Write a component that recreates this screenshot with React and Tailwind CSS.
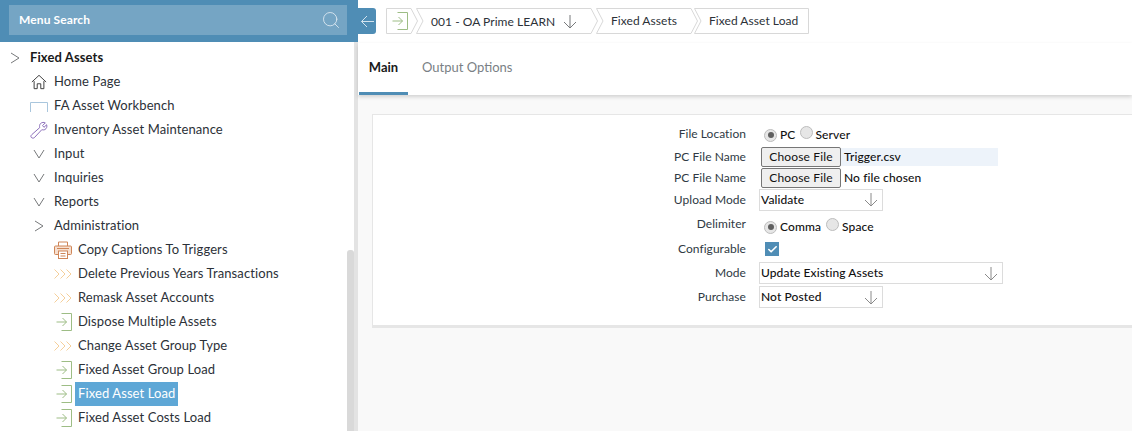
import React from "react";
import { Search, Check } from "lucide-react";

const Chev = ({ dir }) => (
  <svg width="14" height="14" viewBox="0 0 14 14" fill="none" stroke="#77797b" strokeWidth="1">
    {dir === "right" ? <path d="M2 2 L10 7 L2 12" /> : <path d="M2 3 L7 11 L12 3" />}
  </svg>
);
const Home = () => (
  <svg className="ml-px" width="16" height="16" viewBox="0 0 18 18" fill="none" stroke="#3d3d3d" strokeWidth="1.1">
    <path d="M1 9 L9 1.5 L17 9 M3.5 8 V16.5 H7 V11 H11 V16.5 H14.5 V8" />
  </svg>
);
const Bench = () => (
  <svg width="18" height="18" viewBox="0 0 18 18" fill="none" stroke="#a9c6dd" strokeWidth="1">
    <path d="M0.5 15 V5.5 H17.5 V15" />
  </svg>
);
const Wrench = () => (
  <svg width="18" height="19" viewBox="0 0 20 20" fill="none" stroke="#8a6cb8" strokeWidth="1.1">
    <path d="M11.5 2.5 C13 .8 15.8 .6 17 1.5 L14 4.5 L15.5 6.5 L18.5 3.6 C19.2 5.5 18.5 8 16.5 9 C15 9.6 14 9.3 13.2 9 L4.8 18 C3.5 19.2 1 18 1 16.8 C.8 16 1.2 15.5 2 14.6 L10.8 6.8 C10.4 5.2 10.6 3.6 11.5 2.5 Z" />
  </svg>
);
const Printer = () => (
  <svg width="18" height="18" viewBox="0 0 18 18" fill="none" stroke="#cf8659" strokeWidth="1">
    <path d="M4.5 5 V1 H13.5 V5" />
    <rect x="0.5" y="5" width="17" height="8.5" rx="1" fill="#f6dfcf" />
    <rect x="4.5" y="10" width="9" height="7.5" fill="#fff" />
    <path d="M3 7.5 H15" />
    <path d="M6.5 12.5 H11.5 M6.5 15 H11.5" />
  </svg>
);
const Triple = () => (
  <svg width="18" height="12" viewBox="0 0 18 12" fill="none" stroke="#f5cf9a" strokeWidth="1">
    <path d="M.5 1.5 L5 6 L.5 10.5 M6.5 1.5 L11 6 L6.5 10.5 M12.5 1.5 L17 6 L12.5 10.5" />
  </svg>
);
const Enter = () => (
  <svg width="16" height="18" viewBox="0 0 16 18" fill="none" stroke="#9dbd85" strokeWidth="1">
    <path d="M5.5 .5 H15.5 V17.5 H5.5" />
    <path d="M.5 9 H10.5 M6.5 5 L10.5 9 L6.5 13" />
  </svg>
);
const Down = ({ c = "#77797b" }) => (
  <svg width="14" height="15" viewBox="0 0 14 15" fill="none" stroke={c} strokeWidth="1">
    <path d="M7 1 V14 M1 8 L7 14 L13 8" />
  </svg>
);

const Row = ({ icon, children, pl, bold, active }) => (
  <div className={`flex items-center h-6 ${pl}`}>
    <span className="flex w-6 shrink-0 items-center justify-start">{icon}</span>
    {active ? (
      <span className="-ml-[5px] flex h-6 items-center bg-[#5ea7d6] px-[3px] text-white">{children}</span>
    ) : (
      <span className={bold ? "font-bold text-[#1a1a1a]" : "text-[#2c3138]"}>{children}</span>
    )}
  </div>
);

const Radio = ({ on }) => (
  <span className="inline-flex h-[13px] w-[13px] shrink-0 items-center justify-center rounded-full border border-[#bdbdbd] bg-[#e6e6e6]">
    {on && <span className="h-[6px] w-[6px] rounded-full bg-[#5f5f5f]" />}
  </span>
);
const Label = ({ children }) => (
  <div className="w-[390px] shrink-0 pr-[17px] text-right text-[12px] tracking-[0.05px] text-[#2f3a44]">{children}</div>
);
const FRow = ({ label, h, children }) => (
  <div className={`flex items-center ${h}`}>
    <Label>{label}</Label>
    <div className="flex items-center text-[12px] tracking-[0.1px]">{children}</div>
  </div>
);
const Select = ({ w, children }) => (
  <div className={`flex h-[22px] items-center justify-between border border-[#dcdcdc] bg-white pl-[1px] pr-[4px] text-[#111] ${w}`}>
    <span className="font-medium">{children}</span>
    <Down c="#8a8a8a" />
  </div>
);
const FileBtn = () => (
  <span className="flex h-5 w-20 items-center justify-center rounded-[2px] border border-[#767676] bg-[#efefef] text-[12px] tracking-[0.15px] text-[#111]">Choose File</span>
);

function Crumbs() {
  const stroke = "#d8d8d8";
  const Shape = ({ w, first, children, pad }) => (
    <div className="relative flex h-[26px] items-center" style={{ width: w }}>
      <svg className="absolute inset-0" width={w} height="26" fill="#fff" stroke={stroke} strokeWidth="1">
        <path d={first
          ? `M.5 .5 H${w - 7} L${w - .5} 13 L${w - 7} 25.5 H.5 Z`
          : `M.5 .5 H${w - 7} L${w - .5} 13 L${w - 7} 25.5 H.5 L7 13 Z`} />
      </svg>
      <div className={`relative flex items-center ${pad}`}>{children}</div>
    </div>
  );
  return (
    <div className="flex items-center text-[12px] tracking-[0.05px]">
      <Shape w={32} first pad="pl-[6px]"><Enter /></Shape>
      <div className="-ml-[2px]">
        <Shape w={182} pad="pl-[15px] gap-[8px]">
          <span className="translate-y-px">001 - OA Prime LEARN</span><Down />
        </Shape>
      </div>
      <div className="-ml-[2px]">
        <Shape w={102} pad="pl-[15px]"><span>Fixed Assets</span></Shape>
      </div>
      <div className="-ml-[4px] flex h-[26px] items-center">
        <div className="relative flex h-[26px] w-[115px] items-center pl-[15px]">
          <svg className="absolute inset-0" width="115" height="26" fill="#fff" stroke={stroke} strokeWidth="1">
            <path d="M.5 .5 H114.5 V25.5 H.5 L7 13 Z" />
          </svg>
          <span className="relative">Fixed Asset Load</span>
        </div>
      </div>
    </div>
  );
}

export default function App() {
  return (
    <div className="flex h-[431px] w-[1132px] overflow-hidden bg-white font-['Lato',sans-serif] text-[13px] tracking-[0.1px]">
      <aside className="flex w-[358px] shrink-0 flex-col border-r-4 border-[#e3e3e3]">
        <div className="-mr-1 flex h-[42px] shrink-0 items-start bg-[#4f8db5] pl-[9px] pt-[5px]">
          <div className="flex h-[30px] w-[338px] items-center justify-between bg-[#75a5c4] pl-[10px] pr-[6px] text-[12px] text-white">
            <span className="font-bold">Menu Search</span>
            <Search size={20} strokeWidth={1} color="#e3edf4" />
          </div>
        </div>
        <div className="relative flex-1 pt-1">
          <Row pl="pl-[9px]" bold icon={<Chev dir="right" />}><span className="-ml-[3px] block">Fixed Assets</span></Row>
          <Row pl="pl-[30px]" icon={<Home />}>Home Page</Row>
          <Row pl="pl-[30px]" icon={<Bench />}>FA Asset Workbench</Row>
          <Row pl="pl-[30px]" icon={<Wrench />}>Inventory Asset Maintenance</Row>
          <Row pl="pl-[32px]" icon={<Chev dir="down" />}><span className="-ml-0.5">Input</span></Row>
          <Row pl="pl-[32px]" icon={<Chev dir="down" />}><span className="-ml-0.5">Inquiries</span></Row>
          <Row pl="pl-[32px]" icon={<Chev dir="down" />}><span className="-ml-0.5">Reports</span></Row>
          <Row pl="pl-[33px]" icon={<Chev dir="right" />}><span className="-ml-[3px]">Administration</span></Row>
          <Row pl="pl-[54px]" icon={<Printer />}>Copy Captions To Triggers</Row>
          <Row pl="pl-[54px]" icon={<Triple />}>Delete Previous Years Transactions</Row>
          <Row pl="pl-[54px]" icon={<Triple />}>Remask Asset Accounts</Row>
          <Row pl="pl-[56px]" icon={<Enter />}><span className="-ml-0.5">Dispose Multiple Assets</span></Row>
          <Row pl="pl-[54px]" icon={<Triple />}>Change Asset Group Type</Row>
          <Row pl="pl-[56px]" icon={<Enter />}><span className="-ml-0.5">Fixed Asset Group Load</span></Row>
          <Row pl="pl-[56px]" active icon={<Enter />}>Fixed Asset Load</Row>
          <Row pl="pl-[56px]" icon={<Enter />}><span className="-ml-0.5">Fixed Asset Costs Load</span></Row>
          <div className="absolute right-0 top-[208px] h-[190px] w-[7px] rounded-t-[3px] bg-[#d9d9d9]" />
        </div>
      </aside>

      <main className="relative flex min-w-0 flex-1 flex-col bg-[#f9f9f9]">
        <div className="absolute left-0 top-2 flex h-[26px] w-[18px] items-center justify-center rounded-r-[3px] bg-[#4f8db5]">
          <svg width="13" height="13" viewBox="0 0 13 13" fill="none" stroke="#d3e3ee" strokeWidth="1">
            <path d="M0.5 6.5 H13 M6 1 L0.5 6.5 L6 12" />
          </svg>
        </div>
        <div className="flex h-[43px] shrink-0 items-start bg-white pl-7 pt-2 text-[#2c3138]">
          <Crumbs />
        </div>
        <div className="flex h-[52px] shrink-0 items-stretch bg-white pl-px tracking-normal shadow-[0_2px_4px_rgba(0,0,0,0.16)]">
          <div className="flex w-[49px] items-center justify-center border-b-[3px] border-[#4f8db5] font-bold text-[#1a1a1a]">Main</div>
          <div className="flex items-center pl-[14px] pb-[3px] text-[#7a7f85]">Output Options</div>
        </div>
        <section className="ml-[14px] mt-[19px] h-[214px] shrink-0 border border-b-[3px] border-r-0 border-[#e6e6e6] bg-white pt-[7px]">
          <FRow label="File Location" h="h-6">
            <span className="flex translate-y-px items-center pl-px">
              <Radio on /><span className="ml-[3px] font-medium text-[#111]">PC</span>
              <span className="ml-[5px]"><Radio /></span><span className="ml-[2px] font-medium text-[#111]">Server</span>
            </span>
          </FRow>
          <FRow label="PC File Name" h="h-[21px]">
            <span className="-ml-[2px]"><FileBtn /></span>
            <span className="flex h-[18px] w-[157px] items-center bg-[#edf3fa] pl-[3px] font-medium text-[#111]">Trigger.csv</span>
          </FRow>
          <FRow label="PC File Name" h="h-[21px]">
            <span className="-ml-[2px]"><FileBtn /></span>
            <span className="pl-[3px] font-medium text-[#111]">No file chosen</span>
          </FRow>
          <FRow label="Upload Mode" h="h-[23px]">
            <span className="-ml-[4px]"><Select w="w-[124px]">Validate</Select></span>
          </FRow>
          <FRow label="Delimiter" h="h-[26px]">
            <span className="flex translate-y-[3px] items-center pl-px">
              <Radio on /><span className="ml-[3px] font-medium text-[#111]">Comma</span>
              <span className="ml-[5px]"><Radio /></span><span className="ml-[3px] font-medium text-[#111]">Space</span>
            </span>
          </FRow>
          <FRow label="Configurable" h="h-6">
            <span className="ml-[2px] flex h-[14px] w-[14px] items-center justify-center bg-[#4f8db5]">
              <Check size={11} strokeWidth={3.5} color="#fff" />
            </span>
          </FRow>
          <FRow label="Mode" h="h-6">
            <span className="-ml-[4px]"><Select w="w-[244px]">Update Existing Assets</Select></span>
          </FRow>
          <FRow label="Purchase" h="h-6">
            <span className="-ml-[4px]"><Select w="w-[124px]">Not Posted</Select></span>
          </FRow>
        </section>
      </main>
    </div>
  );
}
